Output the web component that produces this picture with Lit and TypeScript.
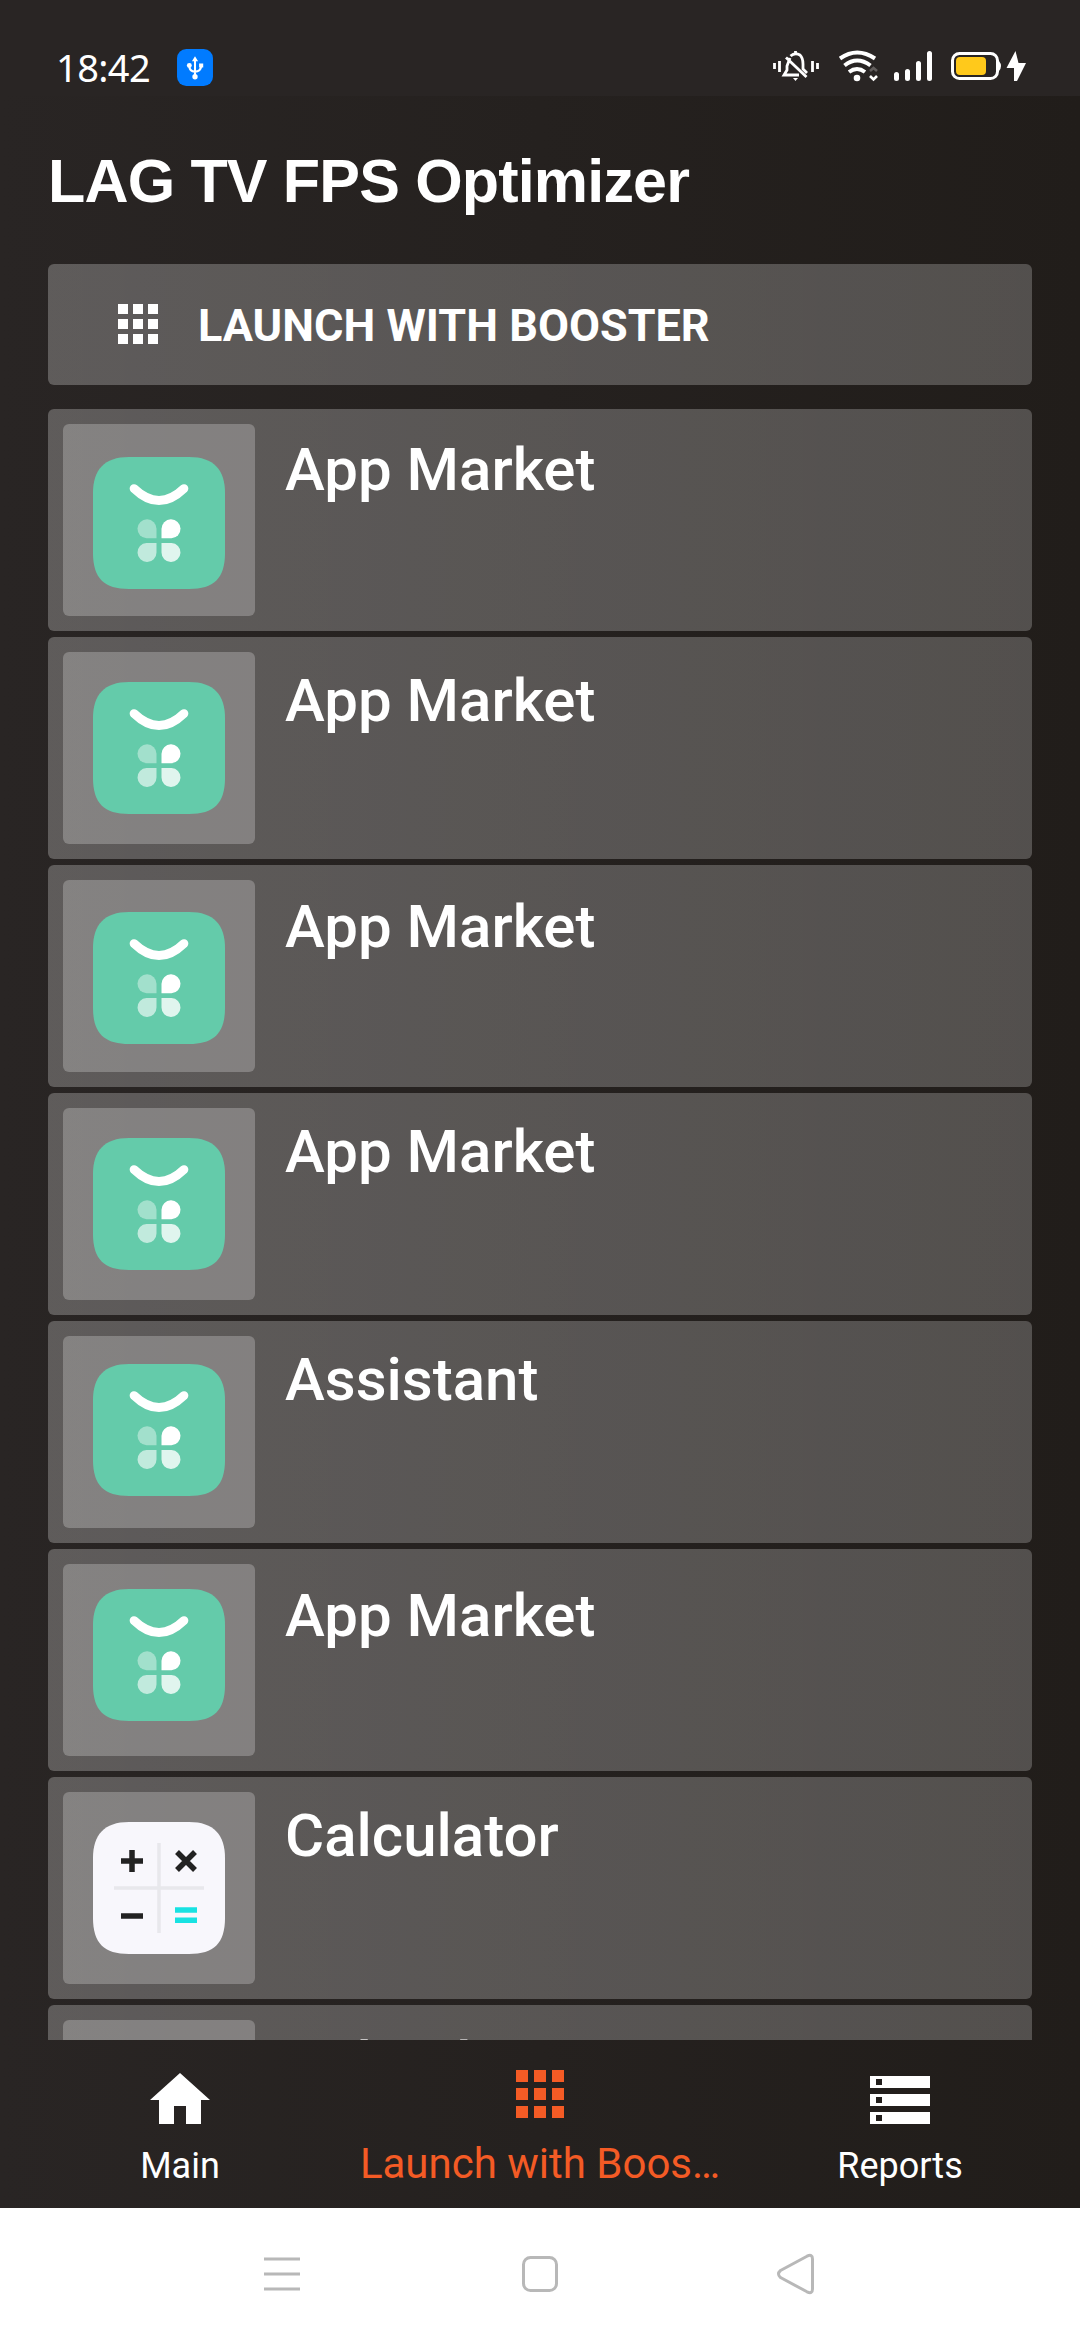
import { LitElement, html, svg, css } from "lit";
import { customElement, property } from "lit/decorators.js";

interface AppEntry {
  name: string;
  icon: "market" | "calculator";
  iconTop: number;
  textTop: number;
}

const APPS: AppEntry[] = [
  { name: "App Market", icon: "market", iconTop: 33, textTop: 1 },
  { name: "App Market", icon: "market", iconTop: 30, textTop: 4 },
  { name: "App Market", icon: "market", iconTop: 32, textTop: 2 },
  { name: "App Market", icon: "market", iconTop: 30, textTop: -1 },
  { name: "Assistant", icon: "market", iconTop: 28, textTop: -1 },
  { name: "App Market", icon: "market", iconTop: 25, textTop: 7 },
  { name: "Calculator", icon: "calculator", iconTop: 30, textTop: -1 },
  { name: "Calendar", icon: "calculator", iconTop: 30, textTop: -1 },
];

const squircle = "M36 0H96C121 0 132 13 132 36V96C132 121 121 132 96 132H36C11 132 0 121 0 96V36C0 13 11 0 36 0Z";

const marketIcon = html`<svg class="app-icon" viewBox="0 0 132 132">
  <path fill="#64cbaa" d=${squircle} />
  <path d="M41 31.500Q66 55.500 91 31.500" fill="none" stroke="#fff" stroke-width="8.700" stroke-linecap="round" />
  <path fill="#fff" fill-opacity=".4" d="M63.500 81.300H53.500A9.500 9.500 0 1 1 63.500 71.800Z" />
  <path fill="#fff" d="M68.500 81.300H78.500A9.500 9.500 0 1 0 68.500 71.800Z" />
  <path fill="#fff" fill-opacity=".6" d="M63.500 86H53.500A9.500 9.500 0 1 0 63.500 95.500Z" />
  <path fill="#fff" fill-opacity=".8" d="M68.500 86H78.500A9.500 9.500 0 1 1 68.500 95.500Z" />
</svg>`;

const calculatorIcon = html`<svg class="app-icon" viewBox="0 0 132 132">
  <path fill="#f8f7fc" d=${squircle} />
  <path stroke="#e8e8ec" stroke-width="3.500" d="M66 21V111M21 66H111" />
  <path stroke="#222" stroke-width="5.500" d="M28 39H50M39 28V50M28 94H50M84 30L102 48M102 30L84 48" />
  <path stroke="#18e2e2" stroke-width="5.500" d="M82 88H104M82 98.300H104" />
</svg>`;

@customElement("status-bar")
class StatusBar extends LitElement {
  static styles = css`
    :host { display: flex; align-items: flex-start; height: 96px; padding: 0 52px 0 56px; box-sizing: border-box; background: #292524; }
    .clock { margin-top: 43px; width: 121px; font: 38px/48px "Noto Sans", sans-serif; color: #fff; letter-spacing: -.6px; white-space: nowrap; }
    .usb { margin-top: 49px; width: 36px; height: 37px; }
    .indicators { margin: 45px 0 0 auto; width: 258px; height: 42px; }
    svg { display: block; }
  `;
  render() {
    return html`
      <span class="clock">18:42</span>
      <svg class="usb" viewBox="0 0 35 36">
        <rect width="35" height="36" rx="9" fill="#017bff" />
        <path fill="#fff" d="M17.500 7L20.500 12H14.500ZM21.500 14H25.500V18H21.500Z" />
        <circle cx="17.500" cy="27" r="2.600" fill="#fff" /><circle cx="12" cy="16" r="2.400" fill="#fff" />
        <path d="M17.500 10V27M12 16Q12 22 17.500 22Q23 22 23.500 17" fill="none" stroke="#fff" stroke-width="2" />
      </svg>
      <svg class="indicators" viewBox="770 45 258 42">
        <g stroke="#fff" fill="none" stroke-width="2.800">
          <path d="M774.500 63V69M779.500 61V72M812.500 61V72M817.500 63V69" />
          <path d="M790 58L787 66V70L784 75H799M790.500 56Q795 52 800 55Q803 58 803 64V69L807 73M795.500 51V54M786 57.500L806.500 77" />
        </g>
        <path d="M793 78H798L795.500 81Z" fill="#fff" />
        <g stroke="#fff" fill="none" stroke-width="4">
          <path d="M840 58.500Q857 46.500 875 58.500M844.500 65.500Q857 55.500 870.500 65.500M849 72Q857 66 865 72" />
        </g>
        <circle cx="857" cy="78" r="3.300" fill="#fff" />
        <path d="M870 71L873.500 68L877 71" fill="none" stroke="#625e5d" stroke-width="2.600" />
        <path d="M870 76L873.500 79.500L877 76" fill="none" stroke="#fff" stroke-width="2.600" />
        <path stroke="#fff" stroke-width="5" stroke-linecap="round" d="M896.500 74.500V78.500M907.500 71.500V78.500M918.500 63.500V78.500M929.500 53.500V78.500" />
        <rect x="952.500" y="53.500" width="45" height="25" rx="7" stroke="#fff" stroke-width="3" fill="none" />
        <path d="M999 61Q1003 66 999 71Z" fill="#fff" />
        <rect x="956" y="57" width="30" height="18" rx="4" fill="#ffc91b" />
        <path d="M1015.500 51L1006.500 68H1014V81H1017L1026 63H1018.500Z" fill="#fff" />
      </svg>`;
  }
}

@customElement("app-row")
class AppRow extends LitElement {
  @property({ attribute: false }) app!: AppEntry;
  static styles = css`
    :host { display: flex; flex: none; height: 222px; padding: 15px; box-sizing: border-box; gap: 30px; border-radius: 6px; background: linear-gradient(90deg, rgba(255, 255, 255, .25), rgba(255, 255, 255, .225)); }
    .tile { width: 192px; height: 192px; padding-left: 30px; box-sizing: border-box; border-radius: 6px; background: rgba(255, 255, 255, .24); }
    .app-icon { display: block; width: 132px; height: 132px; }
    .name { font: 500 60px/70px Roboto, sans-serif; color: #fff; white-space: nowrap; }
  `;
  render() {
    const a = this.app;
    return html`
      <div class="tile"><div style="padding-top:${a.iconTop}px">${a.icon === "market" ? marketIcon : calculatorIcon}</div></div>
      <div class="name" style="margin-top:${a.textTop + 10}px">${a.name}</div>`;
  }
}

const gridCells = (size: number, gap: number) =>
  [0, 1, 2].map((r) => [0, 1, 2].map((c) => svg`<rect x=${c * (size + gap)} y=${r * (size + gap)} width=${size} height=${size} />`));

@customElement("bottom-tabs")
class BottomTabs extends LitElement {
  static styles = css`
    :host { display: grid; grid-template-columns: repeat(3, 1fr); flex: none; height: 168px; font: 36px/44px Roboto, sans-serif; color: #fff; }
    .tab { display: flex; flex-direction: column; align-items: center; white-space: nowrap; min-width: 0; }
    .active { color: #f45b25; font-size: 42px; }
    svg { display: block; fill: currentColor; }
    .home { width: 60px; height: 52px; margin-top: 33px; }
    .grid { width: 48px; height: 48px; margin-top: 30px; }
    .reports { width: 60px; height: 48px; margin-top: 36px; }
    .label { margin-top: 20px; }
    .home + .label { margin-top: 19px; }
    .active .label { margin-top: 24px; }
  `;
  render() {
    return html`
      <div class="tab">
        <svg class="home" viewBox="0 0 60 52"><path d="M30 0L60 27H51V51H36V33H24V51H9V27H0Z" /></svg>
        <span class="label">Main</span>
      </div>
      <div class="tab active">
        <svg class="grid" viewBox="0 0 48 48">${gridCells(12, 6)}</svg>
        <span class="label">Launch with Boos…</span>
      </div>
      <div class="tab">
        <svg class="reports" viewBox="0 0 60 48"><path fill-rule="evenodd" d="M0 0H60V12H0ZM6 3V9H12V3ZM0 18H60V30H0ZM6 21V27H12V21ZM0 36H60V48H0ZM6 39V45H12V39Z" /></svg>
        <span class="label">Reports</span>
      </div>`;
  }
}

@customElement("system-nav")
class SystemNav extends LitElement {
  static styles = css`
    :host { display: flex; justify-content: center; align-items: center; gap: 218px; flex: none; height: 132px; background: #fff; }
    svg { width: 40px; height: 40px; fill: none; stroke: #b8b8b8; stroke-width: 3; overflow: visible; }
  `;
  render() {
    return html`
      <svg viewBox="0 0 40 40"><path d="M2 5H38M2 20H38M2 35H38" /></svg>
      <svg viewBox="0 0 40 40"><rect x="3.500" y="3.500" width="33" height="33" rx="7" /></svg>
      <svg viewBox="0 0 40 40"><path stroke-linejoin="round" d="M29 2.200Q34.500 -.5 34.500 5V35Q34.500 40.500 29 37.800L2.500 23.500Q-1.500 20 2.500 16.500Z" /></svg>`;
  }
}

@customElement("app-root")
class AppRoot extends LitElement {
  static styles = css`
    :host { display: flex; flex-direction: column; width: 1080px; height: 2340px; overflow: hidden; background: linear-gradient(90deg, #292524, #211d1a); }
    .title { margin: 0; padding: 50px 0 0 48px; height: 168px; box-sizing: border-box; font: 700 61px/70px "Liberation Sans", sans-serif; letter-spacing: -.82px; color: #fff; white-space: nowrap; }
    .banner { display: flex; align-items: flex-start; flex: none; gap: 40px; height: 121px; margin: 0 48px 24px; padding: 40px 0 0 70px; box-sizing: border-box; border-radius: 6px; background: linear-gradient(90deg, rgba(255, 255, 255, .25), rgba(255, 255, 255, .225)); color: #fff; font: 700 45px/60px Roboto, sans-serif; }
    .banner-icon { width: 40px; height: 40px; fill: #fff; }
    .banner-label { margin-top: -8px; }
    .list { display: flex; flex-direction: column; gap: 6px; height: 1631px; flex: none; margin: 0 48px; overflow: hidden; }
  `;
  render() {
    return html`
      <status-bar></status-bar>
      <h1 class="title">LAG TV FPS Optimizer</h1>
      <div class="banner">
        <svg class="banner-icon" viewBox="0 0 40 40">${gridCells(10, 5)}</svg>
        <span class="banner-label">LAUNCH WITH BOOSTER</span>
      </div>
      <div class="list">${APPS.map((a) => html`<app-row .app=${a}></app-row>`)}</div>
      <bottom-tabs></bottom-tabs>
      <system-nav></system-nav>`;
  }
}
